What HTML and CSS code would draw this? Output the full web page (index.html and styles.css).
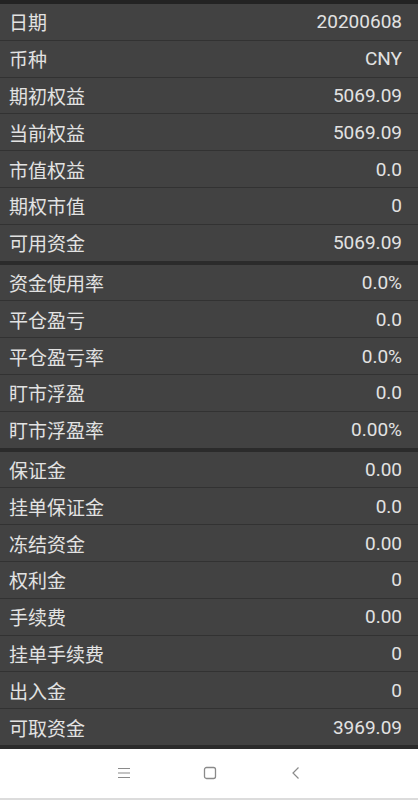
FILE: index.html
```html
<!DOCTYPE html>
<html>
<head>
<meta charset="utf-8">
<link rel="stylesheet" href="styles.css">
</head>
<body>
<div class="screen">
  <div class="topband"></div>
  <div class="group">
    <div class="row"><span class="label">日期</span><span class="value">20200608</span></div>
    <div class="row"><span class="label">币种</span><span class="value">CNY</span></div>
    <div class="row"><span class="label">期初权益</span><span class="value">5069.09</span></div>
    <div class="row"><span class="label">当前权益</span><span class="value">5069.09</span></div>
    <div class="row"><span class="label">市值权益</span><span class="value">0.0</span></div>
    <div class="row"><span class="label">期权市值</span><span class="value">0</span></div>
    <div class="row"><span class="label">可用资金</span><span class="value">5069.09</span></div>
  </div>
  <div class="group">
    <div class="row"><span class="label">资金使用率</span><span class="value">0.0%</span></div>
    <div class="row"><span class="label">平仓盈亏</span><span class="value">0.0</span></div>
    <div class="row"><span class="label">平仓盈亏率</span><span class="value">0.0%</span></div>
    <div class="row"><span class="label">盯市浮盈</span><span class="value">0.0</span></div>
    <div class="row"><span class="label">盯市浮盈率</span><span class="value">0.00%</span></div>
  </div>
  <div class="group">
    <div class="row"><span class="label">保证金</span><span class="value">0.00</span></div>
    <div class="row"><span class="label">挂单保证金</span><span class="value">0.0</span></div>
    <div class="row"><span class="label">冻结资金</span><span class="value">0.00</span></div>
    <div class="row"><span class="label">权利金</span><span class="value">0</span></div>
    <div class="row"><span class="label">手续费</span><span class="value">0.00</span></div>
    <div class="row"><span class="label">挂单手续费</span><span class="value">0</span></div>
    <div class="row"><span class="label">出入金</span><span class="value">0</span></div>
    <div class="row"><span class="label">可取资金</span><span class="value">3969.09</span></div>
  </div>
  <div class="navbar">
    <svg class="navicon" width="16" height="16" viewBox="0 0 16 16"><path d="M2 3.5H14M2 8H14M2 12.5H14" stroke="#8a8a8a" stroke-width="1.2" fill="none"/></svg>
    <svg class="navicon" width="16" height="16" viewBox="0 0 16 16"><rect x="2.5" y="2.5" width="11" height="11" rx="2" stroke="#8a8a8a" stroke-width="1.3" fill="none"/></svg>
    <svg class="navicon" width="16" height="16" viewBox="0 0 16 16"><path d="M10.5 2.5L5 8L10.5 13.5" stroke="#8a8a8a" stroke-width="1.2" fill="none"/></svg>
  </div>
</div>
</body>
</html>
```

FILE: styles.css
```css
html, body {
  margin: 0;
  padding: 0;
  background: #ffffff;
}
.screen {
  width: 418px;
  height: 800px;
  display: flex;
  flex-direction: column;
  background: #2b2b2b;
  overflow: hidden;
}
.topband {
  height: 4px;
  background: #232323;
}
.group {
  display: flex;
  flex-direction: column;
  margin-bottom: 4px;
  background: #323232;
  gap: 1px;
}
.row {
  height: 35.8px;
  display: flex;
  align-items: center;
  justify-content: space-between;
  padding: 0 16px 0 9px;
  background: #424242;
  color: #e2e2e2;
  font-family: Roboto, "Noto Sans CJK SC", sans-serif;
  font-size: 18px;
}
.label {
  font-family: "Noto Sans CJK SC", sans-serif;
  font-size: 19px;
}
.value {
  font-family: Roboto, sans-serif;
  font-size: 19px;
}
.navbar {
  flex: 1;
  background: #ffffff;
  border-bottom: 2px solid #dcdcdc;
  display: flex;
  align-items: center;
  justify-content: center;
  gap: 70px;
  padding-left: 2px;
}
.navicon {
  display: block;
}
```
